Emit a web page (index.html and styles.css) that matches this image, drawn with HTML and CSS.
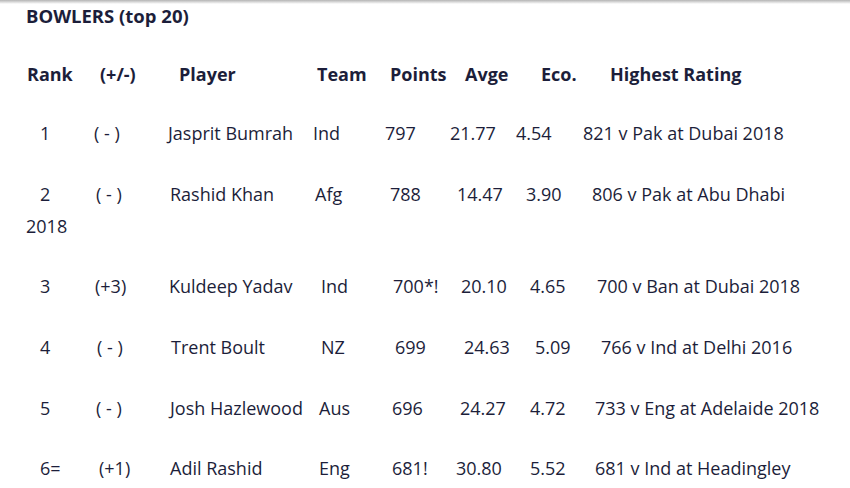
FILE: index.html
```html
<!DOCTYPE html>
<html lang="en">
<head>
<meta charset="utf-8">
<title>Bowlers (top 20)</title>
<link rel="stylesheet" href="styles.css">
</head>
<body>
<div class="page">
  <h2 class="title">BOWLERS (top 20)</h2>
  <p class="row head">
    <span class="c rank">Rank</span><span class="c chg">(+/-)</span><span class="c pl">Player</span><span class="c tm">Team</span><span class="c pt">Points</span><span class="c av">Avge</span><span class="c ec">Eco.</span><span class="hi">Highest Rating</span>
  </p>
  <p class="row r1">
    <span class="c rank">1</span><span class="c chg">( - )</span><span class="c pl">Jasprit Bumrah</span><span class="c tm">Ind</span><span class="c pt">797</span><span class="c av">21.77</span><span class="c ec">4.54</span><span class="hi">821 v Pak at Dubai 2018</span>
  </p>
  <p class="row r2">
    <span class="c rank">2</span><span class="c chg">( - )</span><span class="c pl">Rashid Khan</span><span class="c tm">Afg</span><span class="c pt">788</span><span class="c av">14.47</span><span class="c ec">3.90</span><span class="hi">806 v Pak at Abu Dhabi</span> <span class="hi">2018</span>
  </p>
  <p class="row r3">
    <span class="c rank">3</span><span class="c chg">(+3)</span><span class="c pl">Kuldeep Yadav</span><span class="c tm">Ind</span><span class="c pt">700*!</span><span class="c av">20.10</span><span class="c ec">4.65</span><span class="hi">700 v Ban at Dubai 2018</span>
  </p>
  <p class="row r4">
    <span class="c rank">4</span><span class="c chg">( - )</span><span class="c pl">Trent Boult</span><span class="c tm">NZ</span><span class="c pt">699</span><span class="c av">24.63</span><span class="c ec">5.09</span><span class="hi">766 v Ind at Delhi 2016</span>
  </p>
  <p class="row r5">
    <span class="c rank">5</span><span class="c chg">( - )</span><span class="c pl">Josh Hazlewood</span><span class="c tm">Aus</span><span class="c pt">696</span><span class="c av">24.27</span><span class="c ec">4.72</span><span class="hi">733 v Eng at Adelaide 2018</span>
  </p>
  <p class="row r6">
    <span class="c rank">6=</span><span class="c chg">(+1)</span><span class="c pl">Adil Rashid</span><span class="c tm">Eng</span><span class="c pt">681!</span><span class="c av">30.80</span><span class="c ec">5.52</span><span class="hi">681 v Ind at Headingley</span>
  </p>
</div>
</body>
</html>
```

FILE: styles.css
```css
html, body {
  margin: 0;
  padding: 0;
  background: #ffffff;
}

body {
  background: linear-gradient(#b4b4b4, #ffffff) no-repeat top left / 100% 4px, #ffffff;
  font-family: "Open Sans", "Noto Sans", sans-serif;
  color: #1c1e3a;
  font-size: 18px;
}

.page {
  width: 800px;
  padding-left: 26px;
}

.title {
  margin: 0 0 26px;
  font-size: 18.5px;
  font-weight: 700;
  line-height: 32px;
}

.row {
  margin: 0 0 28.7px;
  line-height: 32px;
  text-indent: 14px;
  white-space: normal;
}

.row:last-child {
  margin-bottom: 0;
}

.head {
  font-weight: 700;
  text-indent: 1px;
  margin-bottom: 27px;
}

.c {
  display: inline-block;
  white-space: nowrap;
  text-indent: 0;
  vertical-align: top;
}

/* column widths: each value is distance to the next column start */
.head .rank { width: 73px; }
.head .chg  { width: 79px; }
.head .pl   { width: 138px; }
.head .tm   { width: 73px; }
.head .pt   { width: 75px; }
.head .av   { width: 76px; }
.head .ec   { width: 69px; }

.r1 .rank { width: 54px; }
.r1 .chg  { width: 74px; }
.r1 .pl   { width: 145px; }
.r1 .tm   { width: 72px; }
.r1 .pt   { width: 65px; }
.r1 .av   { width: 66px; }
.r1 .ec   { width: 67px; }

.r2 .rank { width: 56px; }
.r2 .chg  { width: 74px; }
.r2 .pl   { width: 145px; }
.r2 .tm   { width: 75px; }
.r2 .pt   { width: 67px; }
.r2 .av   { width: 69px; }
.r2 .ec   { width: 66px; }

.r3 .rank { width: 55px; }
.r3 .chg  { width: 74px; }
.r3 .pl   { width: 152px; }
.r3 .tm   { width: 72px; }
.r3 .pt   { width: 68px; }
.r3 .av   { width: 69px; }
.r3 .ec   { width: 67px; }

.r4 .rank { width: 57px; }
.r4 .chg  { width: 74px; }
.r4 .pl   { width: 150px; }
.r4 .tm   { width: 74px; }
.r4 .pt   { width: 69px; }
.r4 .av   { width: 71px; }
.r4 .ec   { width: 66px; }

.r5 .rank { width: 56px; }
.r5 .chg  { width: 74px; }
.r5 .pl   { width: 149px; }
.r5 .tm   { width: 73px; }
.r5 .pt   { width: 68px; }
.r5 .av   { width: 70px; }
.r5 .ec   { width: 65px; }

.r6 .rank { width: 59px; }
.r6 .chg  { width: 71px; }
.r6 .pl   { width: 149px; }
.r6 .tm   { width: 73px; }
.r6 .pt   { width: 64px; }
.r6 .av   { width: 74px; }
.r6 .ec   { width: 65px; }

.hi {
  text-indent: 0;
}
```
